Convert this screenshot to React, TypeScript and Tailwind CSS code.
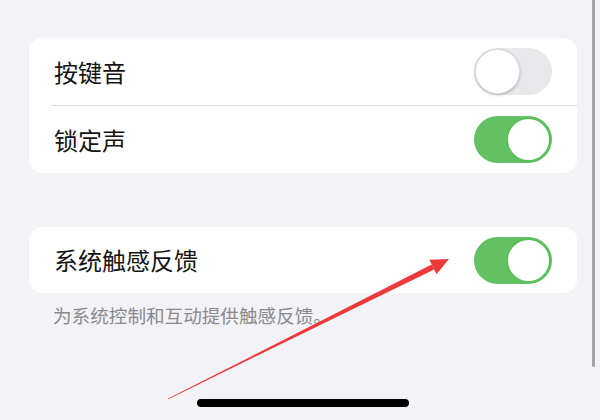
import React from "react";

const font = { fontFamily: '"Noto Sans CJK SC", "Noto Sans", sans-serif' };

function Toggle({ on }: { on: boolean }) {
  return on ? (
    <div className="relative h-[47px] w-[78px] shrink-0 rounded-full bg-[#62c263]">
      <div className="absolute right-[1px] top-[1px] h-[45px] w-[45px] rounded-full bg-white border-[2px] border-[#5cbd5d]" />
    </div>
  ) : (
    <div className="relative h-[47px] w-[78px] shrink-0 rounded-full bg-[#e8e8ea]">
      <div className="absolute left-[1px] top-[1px] h-[45px] w-[45px] rounded-full bg-white shadow-[0_1px_3px_rgba(0,0,0,0.25)] border border-[#dcdcdf]" />
    </div>
  );
}

function Row({ label, on }: { label: string; on: boolean }) {
  return (
    <div className="flex h-[67px] items-center justify-between pl-[25px] pr-[25px]">
      <span className="text-[24px] leading-none text-[#141414]">{label}</span>
      <Toggle on={on} />
    </div>
  );
}

export default function App() {
  return (
    <div
      className="relative h-[420px] w-[600px] overflow-hidden bg-[#f2f2f7]"
      style={font}
    >
      <div className="flex flex-col pl-[29px] pr-[23px] pt-[38px]">
        <div className="overflow-hidden rounded-[13px] bg-white">
          <Row label="按键音" on={false} />
          <div className="ml-[23px] h-px bg-[#d9d9dd]" />
          <Row label="锁定声" on={true} />
        </div>
        <div className="mt-[54px] overflow-hidden rounded-[13px] bg-white">
          <div className="flex h-[66px] items-center justify-between pl-[25px] pr-[25px]">
            <span className="text-[24px] leading-none text-[#141414]">系统触感反馈</span>
            <Toggle on={true} />
          </div>
        </div>
        <p className="mt-[9px] pl-[24px] text-[18.6px] leading-[26px] text-[#8a8a8e]">
          为系统控制和互动提供触感反馈。
        </p>
      </div>

      <div className="absolute left-[592px] top-0 h-[367px] w-[3px] rounded-b-full bg-[#a3a3a8]" />

      <div className="absolute left-[197px] top-[399px] h-[8px] w-[212px] rounded-full bg-black" />

      <svg
        className="absolute left-0 top-0"
        width="600"
        height="420"
        viewBox="0 0 600 420"
      >
        <polygon
          points="167.8,399.4 168.2,398.6 431.6,264.6 434.2,269.4"
          fill="#ec3a3a"
        />
        <polygon points="449,259 429.3,259.8 436.5,274.2" fill="#ec3a3a" />
      </svg>
    </div>
  );
}
